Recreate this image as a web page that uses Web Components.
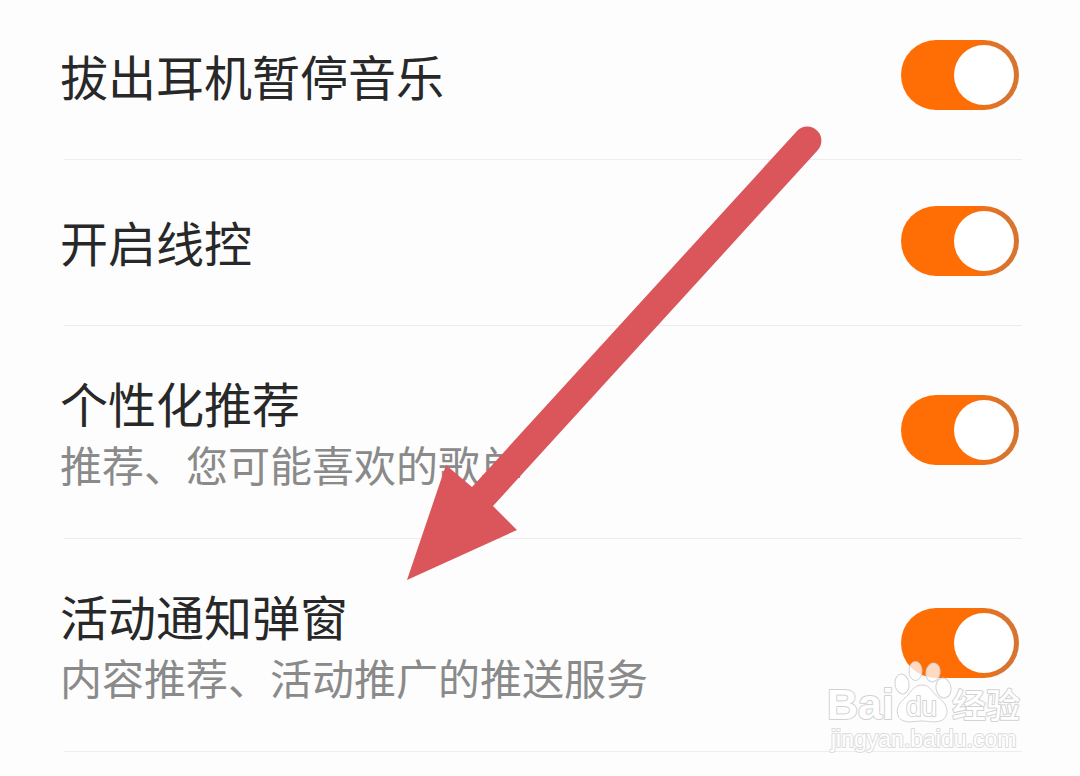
<!DOCTYPE html>
<html lang="zh-CN">
<head>
<meta charset="utf-8">
<meta name="viewport" content="width=device-width, initial-scale=1">
<title>设置</title>
<style>
body { margin: 0; background: #fdfdfd; font-family: "Noto Sans CJK SC", "Noto Sans", sans-serif; }
</style>
</head>
<body>
<settings-page>
  <setting-row heading="拔出耳机暂停音乐"></setting-row>
  <setting-row heading="开启线控"></setting-row>
  <setting-row heading="个性化推荐" note="推荐、您可能喜欢的歌单"></setting-row>
  <setting-row heading="活动通知弹窗" note="内容推荐、活动推广的推送服务"></setting-row>
  <pointer-arrow slot="overlay"></pointer-arrow>
  <site-mark slot="overlay"></site-mark>
</settings-page>
<script>
function define(name, html, setup) {
  const tpl = document.createElement('template');
  tpl.innerHTML = html;
  customElements.define(name, class extends HTMLElement {
    connectedCallback() {
      if (this.shadowRoot) return;
      this.attachShadow({ mode: 'open' }).append(tpl.content.cloneNode(true));
      if (setup) setup(this, this.shadowRoot);
    }
  });
}

define('settings-page', `
<style>
  :host { display: block; position: relative; overflow: hidden; min-height: 100vh; }
  main { display: flex; flex-direction: column; }
  ::slotted(setting-row:first-child) { margin-top: -6px; }
</style>
<main><slot></slot></main>
<slot name="overlay"></slot>`);

define('setting-row', `
<style>
  :host { display: block; }
  .row { display: flex; align-items: center; justify-content: space-between; gap: 24px; padding: 46px 61px 49px 60px; }
  label { display: block; color: #282828; }
  .title { display: block; font-size: 48px; line-height: 60px; }
  .note { display: block; margin-top: 2px; font-size: 42px; line-height: 60px; color: #8a8a8a; }
  .has-note { padding-top: 40px; padding-bottom: 44px; }
  .has-note label { padding-top: 6px; }
  input { appearance: none; flex: none; display: flex; align-items: center; justify-content: flex-end;
    box-sizing: border-box; width: 118px; height: 70px; margin: 0; padding: 5px; border-radius: 35px;
    background: linear-gradient(90deg, #ff6d05 60%, #d9742f 85%); cursor: pointer; }
  input::before { content: ""; width: 60px; height: 60px; border-radius: 50%; background: #fff; }
  input:not(:checked) { justify-content: flex-start; background: #ddd; }
  hr { height: 1px; margin: 0 58px 0 64px; border: 0; background: #ededed; }
</style>
<div class="row">
  <label for="switch"><span class="title"></span></label>
  <input type="checkbox" id="switch" checked>
</div>
<hr>`, (host, root) => {
  root.querySelector('.title').textContent = host.getAttribute('heading');
  if (host.hasAttribute('note')) {
    const note = document.createElement('span');
    note.className = 'note';
    note.textContent = host.getAttribute('note');
    root.querySelector('label').append(note);
    root.querySelector('.row').classList.add('has-note');
  }
});

define('pointer-arrow', `
<style>
  :host { position: absolute; left: 400px; top: 120px; pointer-events: none; }
  svg { display: block; }
</style>
<svg width="430" height="470" viewBox="400 120 430 470" aria-hidden="true">
  <path d="M797 131A14 14 0 0 1 817.500 150.500L493 506L517 530L407 580L446 465L472 487Z" fill="#db565b"/>
</svg>`);

define('site-mark', `
<style>
  :host { position: absolute; right: 56px; top: 656px; pointer-events: none; }
  svg { display: block; }
  text { font-family: "Liberation Sans", Arial, sans-serif; fill: #fff; stroke: #d2d2d2; stroke-width: 2px; stroke-linejoin: round; paint-order: stroke; }
  .cjk { font-family: "Noto Sans CJK SC", sans-serif; }
  .url { stroke: #dcdcdc; }
</style>
<svg width="200" height="100" viewBox="824 656 200 100">
  <text x="827" y="719" font-size="43" font-weight="700">Bai</text>
  <g fill="#fff" fill-opacity=".75" stroke="#d2d2d2" stroke-width="1">
    <ellipse cx="902" cy="684" rx="7" ry="10" transform="rotate(-8 902 684)"/>
    <ellipse cx="915.500" cy="671" rx="6.500" ry="9.500"/>
    <ellipse cx="933" cy="672.500" rx="7" ry="9.500" transform="rotate(10 933 672.500)"/>
    <ellipse cx="943.500" cy="688" rx="7.500" ry="10" transform="rotate(-12 943.500 688)"/>
    <path fill-opacity="1" d="M922 685C931 685 932 693 939 698C949 705 950 718 940 721C933 723 928 721 922 721C915 721 911 723 904 721C895 718 895 706 904 699C912 692 913 685 922 685Z"/>
  </g>
  <text x="906" y="716" font-size="28">du</text>
  <text class="cjk" x="952" y="718" font-size="34" font-weight="500">经验</text>
  <text class="url" x="831" y="747" font-size="23">jingyan.baidu.com</text>
</svg>`);
</script>
</body>
</html>
